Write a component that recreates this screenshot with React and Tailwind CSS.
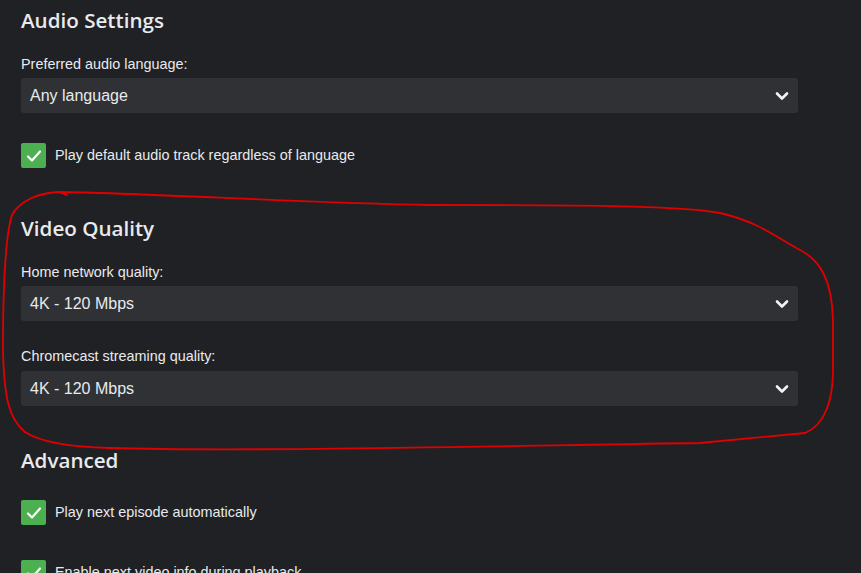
import { useState } from "react";

const Chevron = () => (
  <svg width="14" height="14" viewBox="0 0 14 14" fill="none">
    <polyline points="2,4.5 7,9.5 12,4.5" stroke="#f1f3f4" strokeWidth="2.6" strokeLinecap="round" strokeLinejoin="round" />
  </svg>
);

const Select = ({ value, className = "" }) => (
  <div className={"flex h-[35px] items-center justify-between rounded-[3px] bg-[#303134] pl-[9px] pr-[9px] " + className}>
    <span className="text-[16px] text-[#e8eaed]">{value}</span>
    <Chevron />
  </div>
);

const Check = ({ label, checked, onToggle, className = "" }) => (
  <div className={"flex items-center gap-[9px] cursor-pointer " + className} onClick={onToggle}>
    <div className={"flex h-[25px] w-[25px] items-center justify-center rounded-[2px] " + (checked ? "bg-[#4caf50]" : "bg-[#303134]")}>
      {checked && (
        <svg width="18" height="18" viewBox="0 0 18 18" fill="none">
          <polyline points="3,9.5 7,13.5 15,4.5" stroke="#ffffff" strokeWidth="2.2" strokeLinecap="round" strokeLinejoin="round" />
        </svg>
      )}
    </div>
    <span className="pt-[1px] text-[14.4px] text-[#e8eaed]">{label}</span>
  </div>
);

const Heading = ({ children, className = "" }) => (
  <h2 className={"h-[28px] text-[20.6px] font-semibold leading-[28px] text-[#e8eaed] " + className} style={{ fontFamily: '"Open Sans", sans-serif' }}>
    {children}
  </h2>
);

const Label = ({ children, className = "" }) => (
  <div className={"h-[17px] text-[14.4px] leading-[17px] text-[#e8eaed] " + className}>{children}</div>
);

export default function App() {
  const [checks, setChecks] = useState({ audio: true, next: true, info: true });
  const flip = (k) => setChecks({ ...checks, [k]: !checks[k] });

  return (
    <div className="relative h-[573px] w-[861px] overflow-hidden bg-[#202124]" style={{ fontFamily: '"Liberation Sans", Arial, sans-serif' }}>
      <div className="flex flex-col pl-[21px] pr-[63px] pt-[6px]">
        <Heading>Audio Settings</Heading>
        <Label className="mt-[22px]">Preferred audio language:</Label>
        <Select value="Any language" className="mt-[5px]" />
        <Check className="mt-[30px]" label="Play default audio track regardless of language" checked={checks.audio} onToggle={() => flip("audio")} />

        <Heading className="mt-[46px]">Video Quality</Heading>
        <Label className="mt-[22px]">Home network quality:</Label>
        <Select value="4K - 120 Mbps" className="mt-[5px]" />
        <Label className="mt-[27px]">Chromecast streaming quality:</Label>
        <Select value="4K - 120 Mbps" className="mt-[6px]" />

        <Heading className="mt-[40px]">Advanced</Heading>
        <Check className="mt-[26px]" label="Play next episode automatically" checked={checks.next} onToggle={() => flip("next")} />
        <Check className="mt-[35px]" label="Enable next video info during playback" checked={checks.info} onToggle={() => flip("info")} />
      </div>

      {/* hand drawn annotation */}
      <svg className="pointer-events-none absolute left-0 top-0" width="861" height="573" viewBox="0 0 861 573" fill="none">
        <path
          d="M67 195 L58 192 C40 193 20 200 12 215 C4 240 3 300 3 350 C4 400 10 420 25 432 C40 442 70 447 110 448 C250 452 500 446 700 443 L805 433 C825 425 833 400 833 370 L833 320 C832 280 820 260 800 250 C780 240 760 222 720 213 C680 206 600 205 430 205 C300 203 150 193 58 192"
          stroke="#e00000"
          strokeWidth="1.8"
          strokeLinecap="round"
          strokeLinejoin="round"
        />
      </svg>
    </div>
  );
}
